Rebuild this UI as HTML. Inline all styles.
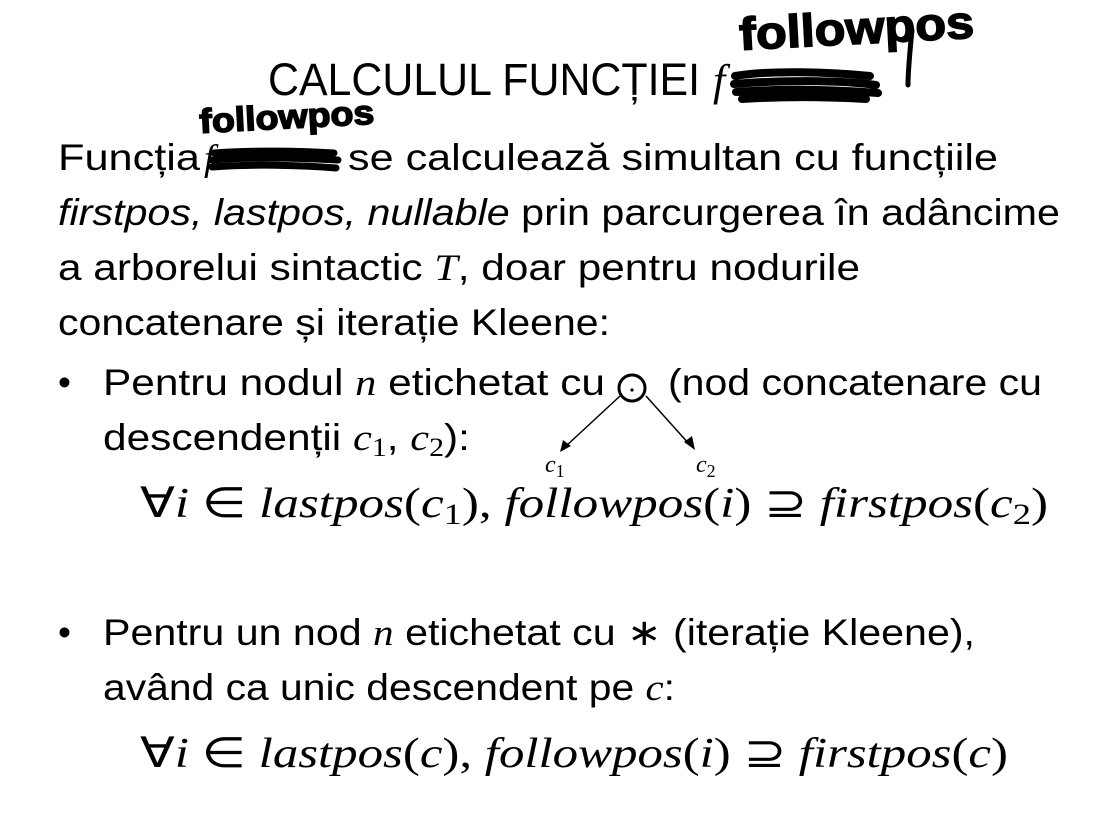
<!DOCTYPE html>
<html><head><meta charset="utf-8"><style>
html,body{margin:0;padding:0;background:#fff;}
svg{display:block}
.s{font-family:"Liberation Sans",sans-serif;fill:#000}
.m{font-family:"Liberation Serif",serif;font-style:italic;fill:#000}
.h{font-family:"Liberation Sans",sans-serif;font-weight:bold;fill:#000;stroke:#000;stroke-width:1.5}
</style></head><body>
<svg width="1117" height="838" viewBox="0 0 1117 838" xmlns="http://www.w3.org/2000/svg">
<rect width="1117" height="838" fill="#fff"/>
<!-- title -->
<text class="s" x="268" y="95" font-size="45" textLength="432" lengthAdjust="spacingAndGlyphs">CALCULUL  FUNCȚIEI</text>
<text class="m" x="713" y="95" font-size="44">f</text>
<path d="M735 76 C770 70 830 72 870 76 M734 84 C780 80 840 80 876 85 M736 92 C790 88 840 90 878 93 M742 99 C790 96 830 97 866 99" stroke="#000" stroke-width="8" fill="none" stroke-linecap="round"/>
<text class="h" x="740" y="50" font-size="46" textLength="235" lengthAdjust="spacingAndGlyphs" transform="rotate(-3 740 50)">followpos</text>
<path d="M912 30 C910 50 908 70 908 85" stroke="#000" stroke-width="5" fill="none" stroke-linecap="round"/>
<!-- paragraph -->
<text class="s" x="58" y="170" font-size="37" textLength="142" lengthAdjust="spacingAndGlyphs">Funcția</text>
<text class="m" x="204" y="170" font-size="37">f</text>
<path d="M214 153 C250 150 300 151 334 153 M212 160 C250 157 300 158 338 160 M212 167 C250 164 300 165 336 168" stroke="#000" stroke-width="7" fill="none" stroke-linecap="round"/>
<text class="h" x="200" y="133" font-size="34" textLength="175" lengthAdjust="spacingAndGlyphs" transform="rotate(-3 200 133)">followpos</text>
<text class="s" x="348" y="170" font-size="37" textLength="650" lengthAdjust="spacingAndGlyphs">se calculează simultan cu funcțiile</text>
<text class="s" x="58" y="225" font-size="37" textLength="1002" lengthAdjust="spacingAndGlyphs"><tspan font-style="italic">firstpos, lastpos, nullable</tspan> prin parcurgerea în adâncime</text>
<text class="s" x="58" y="280" font-size="37" textLength="802" lengthAdjust="spacingAndGlyphs">a arborelui sintactic <tspan font-family="Liberation Serif" font-style="italic">T</tspan>, doar pentru nodurile</text>
<text class="s" x="58" y="335" font-size="37" textLength="552" lengthAdjust="spacingAndGlyphs">concatenare și iterație Kleene:</text>
<!-- bullet 1 -->
<text class="s" x="58" y="395" font-size="37">•</text>
<text class="s" x="103" y="395" font-size="37" textLength="502" lengthAdjust="spacingAndGlyphs">Pentru nodul <tspan font-family="Liberation Serif" font-style="italic">n</tspan> etichetat cu</text>
<circle cx="632" cy="388" r="13" fill="none" stroke="#000" stroke-width="3"/>
<circle cx="632" cy="390" r="1.6" fill="#000"/>
<text class="s" x="668" y="395" font-size="37" textLength="374" lengthAdjust="spacingAndGlyphs">(nod concatenare cu</text>
<text class="s" x="103" y="450" font-size="37" textLength="367" lengthAdjust="spacingAndGlyphs">descendenții <tspan font-family="Liberation Serif" font-style="italic">c</tspan><tspan font-family="Liberation Serif" font-size="26" dy="6">1</tspan><tspan dy="-6">, </tspan><tspan font-family="Liberation Serif" font-style="italic">c</tspan><tspan font-family="Liberation Serif" font-size="26" dy="6">2</tspan><tspan dy="-6">):</tspan></text>
<path d="M620 396 L565 447 M646 396 L690 445" stroke="#000" stroke-width="1.5"/>
<path d="M560 452 L563 440 L571 446 Z M695 450 L684 442 L692 436 Z" fill="#000"/>
<text class="m" x="545" y="472" font-size="24">c<tspan font-style="normal" font-size="18" dy="5">1</tspan></text>
<text class="m" x="696" y="472" font-size="24">c<tspan font-style="normal" font-size="18" dy="5">2</tspan></text>
<text class="m" x="140" y="517" font-size="42" textLength="908" lengthAdjust="spacingAndGlyphs"><tspan font-style="normal">∀</tspan>i <tspan font-style="normal">∈</tspan> lastpos<tspan font-style="normal">(</tspan>c<tspan font-style="normal" font-size="30" dy="7">1</tspan><tspan font-style="normal" dy="-7">),</tspan> followpos<tspan font-style="normal">(</tspan>i<tspan font-style="normal">) ⊇ </tspan>firstpos<tspan font-style="normal">(</tspan>c<tspan font-style="normal" font-size="30" dy="7">2</tspan><tspan font-style="normal" dy="-7">)</tspan></text>
<!-- bullet 2 -->
<text class="s" x="58" y="645" font-size="37">•</text>
<text class="s" x="103" y="645" font-size="37" textLength="872" lengthAdjust="spacingAndGlyphs">Pentru un nod <tspan font-family="Liberation Serif" font-style="italic">n</tspan> etichetat cu <tspan font-family="Liberation Serif">∗</tspan> (iterație Kleene),</text>
<text class="s" x="103" y="700" font-size="37" textLength="572" lengthAdjust="spacingAndGlyphs">având ca unic descendent pe <tspan font-family="Liberation Serif" font-style="italic">c</tspan>:</text>
<text class="m" x="140" y="767" font-size="42" textLength="868" lengthAdjust="spacingAndGlyphs"><tspan font-style="normal">∀</tspan>i <tspan font-style="normal">∈</tspan> lastpos<tspan font-style="normal">(</tspan>c<tspan font-style="normal">),</tspan> followpos<tspan font-style="normal">(</tspan>i<tspan font-style="normal">) ⊇ </tspan>firstpos<tspan font-style="normal">(</tspan>c<tspan font-style="normal">)</tspan></text>
</svg>
</body></html>
